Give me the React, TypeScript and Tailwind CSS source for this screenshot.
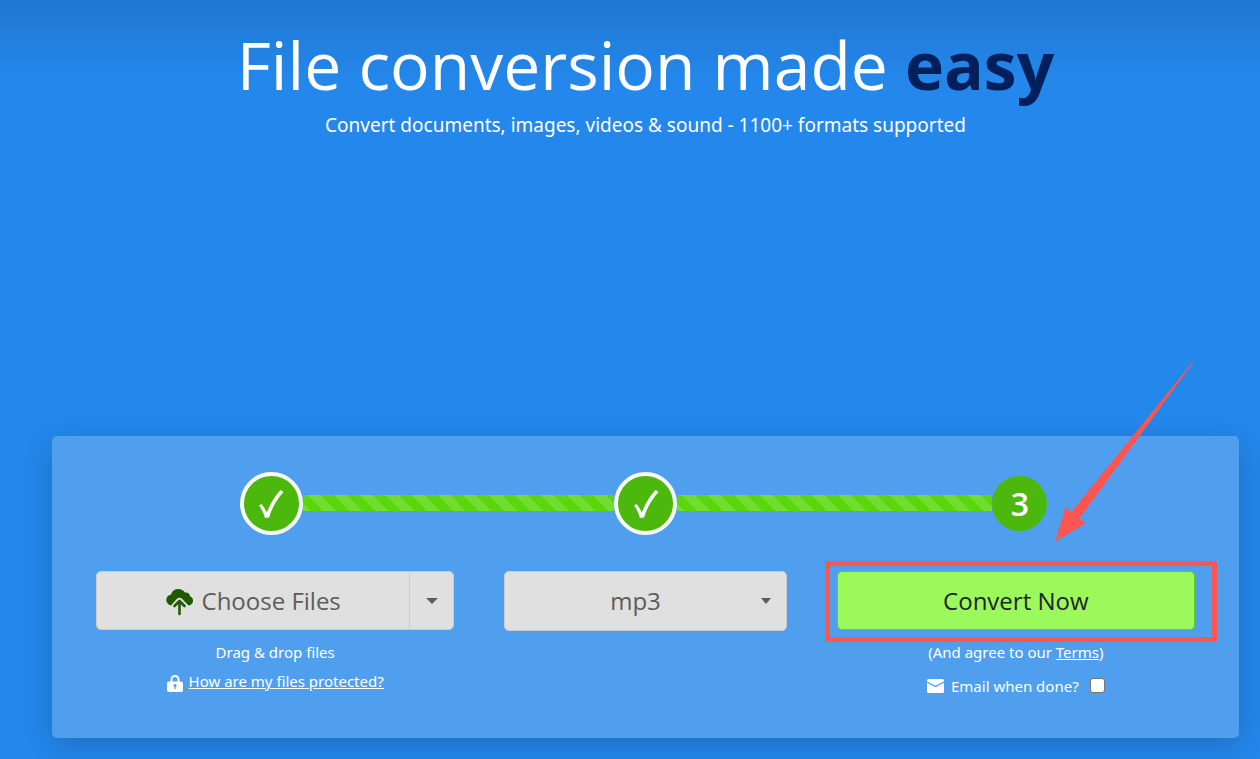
import React from "react";

function Arrow() {
  return (
    <svg
      className="pointer-events-none absolute -top-[212px] right-0"
      width="140"
      height="182"
      viewBox="0 0 140 182"
      aria-hidden="true"
    >
      <path
        d="M138.500 2.500 L23.500 160 L30.500 164 L1 181.500 L11 148.500 L16 154 Z"
        fill="#fd5550"
        stroke="#fd5550"
        strokeLinejoin="round"
      />
    </svg>
  );
}

const stripes =
  "bg-[#5bd60d] bg-[linear-gradient(45deg,rgba(255,255,255,.15)_25%,transparent_25%,transparent_50%,rgba(255,255,255,.15)_50%,rgba(255,255,255,.15)_75%,transparent_75%)] bg-size-[26px_26px] bg-position-[4px_0px]";

function Bar({ filled }: { filled: boolean }) {
  return <div className={filled ? `mb-px h-4 flex-1 ${stripes}` : "h-4 flex-1"} />;
}

function Step({ label, before, after }: { label?: string; before: boolean; after: boolean }) {
  return (
    <li className="flex items-center">
      <Bar filled={before} />
      {label ? (
        <span className="flex size-[55px] items-center justify-center rounded-full bg-[#4cb70d] text-[32px] font-semibold">
          {label}
        </span>
      ) : (
        <span className="flex size-[63px] items-center justify-center rounded-full border-4 border-[#f8f9fa] bg-[#4cb70d]">
          <svg width="28" height="30" viewBox="0 0 28 30" role="img" aria-label="Done">
            <path
              d="M2 16.500 L4.500 15 Q7.500 18.500 9.800 23.500 Q15 10 23.500 1 L26.500 3 Q16.500 14 12 28.500 L8 29 Q6 21.500 2 16.500 Z"
              fill="#fff"
            />
          </svg>
        </span>
      )}
      <Bar filled={after} />
    </li>
  );
}

function Caret({ small }: { small?: boolean }) {
  return (
    <svg width={small ? 10 : 12} height="6" viewBox="0 0 12 6" preserveAspectRatio="none" aria-hidden="true">
      <path d="M0 0H12L6 6Z" fill="#5c5c5c" />
    </svg>
  );
}

export default function App() {
  return (
    <main className="min-h-screen overflow-hidden bg-[#2487eb] bg-[linear-gradient(#1f77d0,#2487eb_80px)] pr-[21px] pl-[52px] font-['Open_Sans','Noto_Sans',sans-serif] text-white">
      <header className="flex h-[436px] flex-col items-center pt-5">
        <h1 className="text-[66px] leading-[88px]">
          File conversion made <b className="font-bold text-[#001f5b]">easy</b>
        </h1>
        <p className="mt-0.5 font-['Noto_Sans',sans-serif] text-[19px] leading-[30px]">
          Convert documents, images, videos &amp; sound - 1100+ formats supported
        </p>
      </header>

      <section className="rounded-[5px] bg-[#509fee] px-8 pt-9 pb-10 shadow-[0_8px_30px_rgba(0,0,0,.18)]">
        <ol className="grid h-[63px] grid-cols-3 items-center">
          <Step before={false} after />
          <Step before after />
          <Step label="3" before after={false} />
        </ol>

        <div className="mt-9 grid grid-cols-3 font-['Noto_Sans',sans-serif] text-[15px] leading-6">
          <div className="flex flex-col items-center pr-1 pl-3">
            <div className="flex h-[59px] w-full rounded-[5px] border border-[#ccc] bg-[#e0e0e0] font-['Open_Sans',sans-serif] text-[#5c5c5c]">
              <button className="flex flex-1 items-center justify-center gap-2 text-2xl">
                <svg className="mt-1" width="28" height="27" viewBox="0 0 28 27" aria-hidden="true">
                  <path
                    d="M5 16.500 C-1.500 15 -1 6.500 5 5.800 C6.500 -1 16 -1.800 19 3.600 C22 3.300 24 4.800 24 7.300 C28.500 9 28 16 22.500 16.500 L16.500 10.200 Q13.500 7.500 10.500 10.200 Z"
                    fill="#1f5a00"
                  />
                  <path
                    d="M13.500 25 V13 M8.500 17 L13.500 12 L18.500 17"
                    fill="none"
                    stroke="#1f5a00"
                    strokeWidth="2.600"
                    strokeLinecap="round"
                    strokeLinejoin="round"
                  />
                </svg>
                Choose Files
              </button>
              <button aria-label="More sources" className="flex w-11 items-center justify-center border-l border-[#ccc]">
                <Caret />
              </button>
            </div>
            <p className="mt-[10px]">Drag &amp; drop files</p>
            <p className="mt-[5px] flex items-center gap-1.5">
              <svg className="mt-1" width="16" height="17" viewBox="0 0 16 17" aria-hidden="true">
                <path d="M4.500 7V4.500a3.500 3.500 0 0 1 7 0V7" fill="none" stroke="#fff" strokeWidth="2" />
                <rect y="6.500" width="16" height="10.500" rx="2" fill="#fff" />
                <circle cx="8" cy="10.500" r="1.500" fill="#509fee" />
                <path d="M8 11v3" stroke="#509fee" strokeWidth="1.300" />
              </svg>
              <a href="#protection" className="underline">How are my files protected?</a>
            </p>
          </div>

          <div className="px-[46px]">
            <div className="relative">
              <select
                aria-label="Output format"
                className="h-[60px] w-full appearance-none rounded-[5px] border border-[#ccc] bg-[#e0e0e0] pr-5 text-center font-['Open_Sans',sans-serif] text-2xl leading-9 text-[#5c5c5c] [text-align-last:center]"
              >
                <option>mp3</option>
              </select>
              <span className="pointer-events-none absolute inset-y-0 right-4 flex items-center">
                <Caret small />
              </span>
            </div>
          </div>

          <div className="flex flex-col items-center pr-3 pl-1">
            <div className="relative w-full">
              <button className="h-[59px] w-full rounded-[5px] border border-[#5bd60d] bg-[#9bf95b] font-['Open_Sans',sans-serif] text-2xl text-[#212529]">
                Convert Now
              </button>
              <span className="pointer-events-none absolute -top-[10px] -right-[22px] -bottom-3 -left-3 rounded-[2px] border-[5px] border-[#fd5550]" />
              <Arrow />
            </div>
            <p className="mt-[10px]">
              (And agree to our <a href="#terms" className="underline">Terms</a>)
            </p>
            <label className="mt-[10px] flex items-center gap-[7px]">
              <svg width="17" height="14" viewBox="0 0 17 14" aria-hidden="true">
                <rect width="17" height="14" rx="1.500" fill="#fff" />
                <path d="M0 3 L7.500 7 Q8.500 7.500 9.500 7 L17 3" fill="none" stroke="#509fee" strokeWidth="1.400" />
              </svg>
              Email when done?
              <input
                type="checkbox"
                className="mb-0.5 ml-1 size-[15px] appearance-none rounded-[3px] border border-[#767676] bg-white"
              />
            </label>
          </div>
        </div>
      </section>
    </main>
  );
}
